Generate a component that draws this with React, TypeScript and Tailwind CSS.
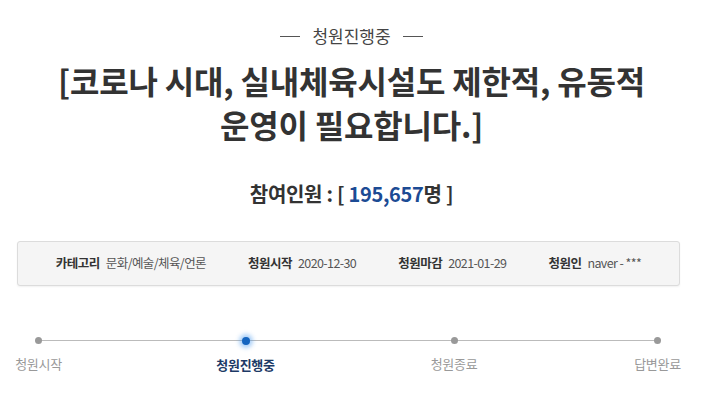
import React from 'react';

const font = { fontFamily: '"Noto Sans CJK KR", "Noto Sans", sans-serif' };

const info = [
  { label: '카테고리', value: '문화/예술/체육/언론' },
  { label: '청원시작', value: '2020-12-30' },
  { label: '청원마감', value: '2021-01-29' },
  { label: '청원인', value: 'naver - ***' },
];

const steps = [
  { label: '청원시작', active: false, w: 'w-[43px]' },
  { label: '청원진행중', active: true, w: 'w-[55px]' },
  { label: '청원종료', active: false, w: 'w-[46px]' },
  { label: '답변완료', active: false, w: 'w-[45px]' },
];

export default function App() {
  return (
    <div className="w-[703px] h-[406px] bg-white text-[#333] overflow-hidden" style={font}>
      {/* status */}
      <div className="flex items-center justify-center gap-3 pt-[22px] h-[50px]">
        <span className="block w-[20px] h-px bg-[#555]" />
        <span className="text-[17px] leading-[22px] text-[#444]">청원진행중</span>
        <span className="block w-[20px] h-px bg-[#555]" />
      </div>

      {/* title */}
      <h1 className="mt-[8px] text-center text-[32px] leading-[44px] font-bold tracking-[-0.2px] text-[#333]">
        [코로나 시대, 실내체육시설도 제한적, 유동적
        <br />
        운영이 필요합니다.]
      </h1>

      {/* count */}
      <div className="mt-[34px] text-center text-[20px] leading-[28px] font-bold tracking-[-0.3px] text-[#333]">
        참여인원 : [ <span className="text-[#1c4b94]">195,657</span>명 ]
      </div>

      {/* info box */}
      <div className="ml-[17px] mr-[23px] mt-[33px] h-[45px] flex items-center justify-center gap-[42px] rounded-[3px] border border-[#dcdcdc] bg-[#f5f5f5] shadow-[0_1px_2px_rgba(0,0,0,0.06)]">
        {info.map((it) => (
          <div key={it.label} className="flex items-center gap-[6px]">
            <span className="font-bold text-[12.5px] tracking-[-0.5px] text-[#333]">{it.label}</span>
            <span className="text-[12.5px] tracking-[-0.6px] text-[#555]">{it.value}</span>
          </div>
        ))}
      </div>

      {/* progress */}
      <div className="relative ml-[17px] mr-[23px] mt-[51px] flex justify-between">
        <div className="absolute left-[20px] right-[22px] top-[3px] h-px bg-[#bbb]" />
        {steps.map((s) => (
          <div key={s.label} className={`relative flex flex-col items-center ${s.w}`}>
            {s.active ? (
              <span className="block w-[8px] h-[8px] rounded-full bg-[#1565c0] shadow-[0_0_4px_3px_rgba(66,150,240,0.45)]" />
            ) : (
              <span className="block w-[7px] h-[7px] rounded-full bg-[#999]" />
            )}
            <span
              className={
                s.active
                  ? 'mt-[11px] whitespace-nowrap text-[13px] leading-[18px] font-bold tracking-[-0.3px] text-[#1d3a66]'
                  : 'mt-[11px] whitespace-nowrap text-[13px] leading-[18px] tracking-[-0.3px] text-[#999]'
              }
            >
              {s.label}
            </span>
          </div>
        ))}
      </div>
    </div>
  );
}
